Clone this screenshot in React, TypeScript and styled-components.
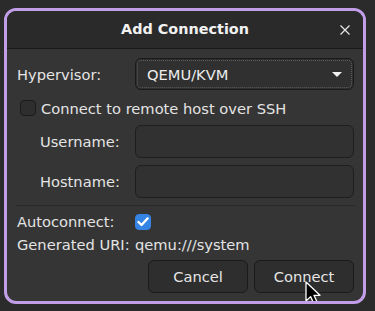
import React from 'react'
import styled, { createGlobalStyle } from 'styled-components'

const GlobalStyle = createGlobalStyle`
    html, body {
        margin: 0;
        padding: 0;
        background: #2b2b2b;
        font-family: "DejaVu Sans", "Liberation Sans", sans-serif;
        font-size: 14.67px;
        color: #e6e6e6;
    }
    * {
        box-sizing: border-box;
    }
`

export default function App(): JSX.Element {
    return (
        <Page>
            <GlobalStyle />
            <Dialog>
                <Header>
                    <span />
                    <Title>Add Connection</Title>
                    <CloseButton aria-label="Close">
                        <svg width="10" height="10" viewBox="0 0 10 10">
                            <path
                                d="M0.5 0.5 L9.5 9.5 M9.5 0.5 L0.5 9.5"
                                stroke="#e8e8e8"
                                strokeWidth="1.2"
                            />
                        </svg>
                    </CloseButton>
                </Header>
                <Body>
                    <FieldRow $height={32}>
                        <Label>Hypervisor:</Label>
                        <Combo>
                            <span>QEMU/KVM</span>
                            <svg width="10" height="5" viewBox="0 0 10 5">
                                <path d="M0 0 L10 0 L5 5 Z" fill="#f2f2f2" />
                            </svg>
                        </Combo>
                    </FieldRow>
                    <CheckRow>
                        <CheckBox />
                        <span>Connect to remote host over SSH</span>
                    </CheckRow>
                    <FieldRow $height={33} $gap={7}>
                        <Label $indent>Username:</Label>
                        <Entry />
                    </FieldRow>
                    <FieldRow $height={33} $gap={7}>
                        <Label $indent>Hostname:</Label>
                        <Entry />
                    </FieldRow>
                    <Separator />
                    <FieldRow $height={16} $gap={7}>
                        <Label>Autoconnect:</Label>
                        <CheckBox $checked>
                            <svg width="12" height="10" viewBox="0 0 12 10">
                                <path
                                    d="M1.5 5 L4.5 8 L10.5 1.5"
                                    stroke="#ffffff"
                                    strokeWidth="2.4"
                                    fill="none"
                                    strokeLinecap="round"
                                    strokeLinejoin="round"
                                />
                            </svg>
                        </CheckBox>
                    </FieldRow>
                    <FieldRow $height={17} $gap={7}>
                        <Label>Generated URI:</Label>
                        <Value>qemu:///system</Value>
                    </FieldRow>
                    <ButtonRow>
                        <Button>Cancel</Button>
                        <Button>Connect</Button>
                    </ButtonRow>
                </Body>
                <Cursor width="20" height="27" viewBox="0 0 20 27">
                    <path
                        d="M1 1 L1 20 L5.6 15.6 L9.2 23.6 L12.6 22.1 L9 14.3 L15 14.3 Z"
                        fill="#000000"
                        stroke="#ffffff"
                        strokeWidth="1.3"
                        strokeLinejoin="round"
                    />
                </Cursor>
            </Dialog>
        </Page>
    )
}

const Page = styled.div`
    display: flex;
    padding: 8px 9px 0 4px;
`
const Dialog = styled.div`
    position: relative;
    width: 362px;
    height: 296px;
    border: 3px solid #c29de8;
    border-radius: 12px;
    background: #353535;
    overflow: hidden;
    display: flex;
    flex-direction: column;
`
const Header = styled.div`
    display: grid;
    grid-template-columns: 1fr auto 1fr;
    align-items: center;
    height: 38px;
    background: #2a2a2a;
    border-bottom: 1px solid #1a1a1a;
    flex-shrink: 0;
`
const Title = styled.div`
    font-weight: bold;
    color: #f2f2f2;
    font-size: 14.4px;
    line-height: 17px;
`
const CloseButton = styled.button`
    justify-self: end;
    width: 24px;
    height: 24px;
    margin-right: 6px;
    margin-top: 1px;
    padding: 0;
    border: none;
    background: transparent;
    display: flex;
    align-items: center;
    justify-content: center;
`
const Body = styled.div`
    display: flex;
    flex-direction: column;
    padding: 9px 9px 8px 10px;
`
const FieldRow = styled.div<{ $height: number; $gap?: number }>`
    display: grid;
    grid-template-columns: 118px 1fr;
    align-items: center;
    height: ${(p) => p.$height}px;
    margin-top: ${(p) => p.$gap ?? 0}px;
`
const Label = styled.div<{ $indent?: boolean }>`
    padding-left: ${(p) => (p.$indent ? 23 : 0)}px;
    line-height: 17px;
    color: #e4e4e4;
`
const Value = styled.div`
    line-height: 17px;
    color: #e4e4e4;
`
const Combo = styled.div`
    position: relative;
    height: 32px;
    border: 1px solid #1a1a1a;
    border-radius: 6px;
    background: #303030;
    display: flex;
    align-items: center;
    justify-content: space-between;
    padding: 0 11px 0 11px;
    color: #ececec;
    &::after {
        content: '';
        position: absolute;
        inset: 1px;
        border: 1px dotted #5c5c5c;
        border-radius: 4px;
    }
`
const CheckRow = styled.div`
    display: flex;
    align-items: center;
    gap: 5px;
    height: 20px;
    margin-top: 8px;
    padding-left: 3px;
    line-height: 17px;
    color: #e4e4e4;
`
const CheckBox = styled.div<{ $checked?: boolean }>`
    width: 16px;
    height: 16px;
    border-radius: 4px;
    border: 1px solid ${(p) => (p.$checked ? '#3584e4' : '#1b1b1b')};
    background: ${(p) => (p.$checked ? '#3584e4' : '#2e2e2e')};
    display: flex;
    align-items: center;
    justify-content: center;
    flex-shrink: 0;
`
const Entry = styled.div`
    height: 33px;
    border: 1px solid #1e1e1e;
    border-radius: 6px;
    background: #313131;
`
const Separator = styled.div`
    height: 1px;
    margin: 7px -1px 0 -1px;
    background: #2a2a2a;
`
const ButtonRow = styled.div`
    display: flex;
    justify-content: flex-end;
    gap: 6px;
    margin-top: 7px;
`
const Button = styled.button`
    width: 100px;
    height: 33px;
    border: 1px solid #1b1b1b;
    border-radius: 6px;
    background: #2e2e2e;
    color: #e6e6e6;
    font-family: "DejaVu Sans", "Liberation Sans", sans-serif;
    font-size: 14.67px;
    padding: 0;
`
const Cursor = styled.svg`
    position: absolute;
    left: 298px;
    top: 270px;
    pointer-events: none;
`
